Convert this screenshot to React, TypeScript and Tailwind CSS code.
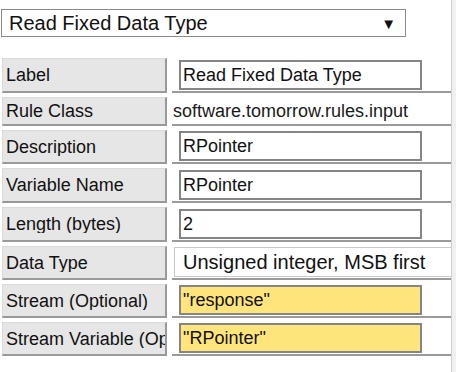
const font = { fontFamily: '"Liberation Sans", Arial, sans-serif' };

type Row = {
  label: string;
  kind: 'input' | 'text' | 'select';
  value: string;
  h: string;
  yellow?: boolean;
};

const rows: Row[] = [
  { label: 'Label', kind: 'input', value: 'Read Fixed Data Type', h: 'h-[35px]' },
  { label: 'Rule Class', kind: 'text', value: 'software.tomorrow.rules.input', h: 'h-[29px]' },
  { label: 'Description', kind: 'input', value: 'RPointer', h: 'h-[34px]' },
  { label: 'Variable Name', kind: 'input', value: 'RPointer', h: 'h-[35px]' },
  { label: 'Length (bytes)', kind: 'input', value: '2', h: 'h-[35px]' },
  { label: 'Data Type', kind: 'select', value: 'Unsigned integer, MSB first', h: 'h-[34px]' },
  { label: 'Stream (Optional)', kind: 'input', value: '"response"', h: 'h-[34px]', yellow: true },
  { label: 'Stream Variable (Optional)', kind: 'input', value: '"RPointer"', h: 'h-[34px]', yellow: true },
];

function Field({ row }: { row: Row }) {
  if (row.kind === 'text') {
    return <div className="pl-[1px] text-[18px] leading-none text-[#1a1a1a]">{row.value}</div>;
  }
  if (row.kind === 'select') {
    return (
      <div className="ml-[2px] flex h-[30px] w-[300px] shrink-0 items-center border border-[#c8c8c8] bg-white pl-[8px] text-[20px] leading-none text-[#111]">
        {row.value}
      </div>
    );
  }
  return (
    <div
      className={`ml-[7px] flex h-[30px] w-[243px] items-center border-2 border-[#858585] pl-[2px] text-[18px] leading-none text-[#111] ${
        row.yellow ? 'bg-[#ffe57c]' : 'bg-white'
      }`}
    >
      {row.value}
    </div>
  );
}

export default function App() {
  return (
    <div className="flex h-[372px] w-[456px] bg-white" style={font}>
      <div className="w-[451px] shrink-0">
        {/* Rule type dropdown */}
        <div className="ml-[1px] mt-[9px] flex h-[28px] w-[405px] items-center justify-between border border-[#8a8a8a] pl-[7px] pr-[9px] text-[20px] leading-none text-[#111]">
          <span>Read Fixed Data Type</span>
          <span className="text-[15px]">▼</span>
        </div>

        {/* Properties */}
        <div className="mt-[21px] flex flex-col gap-[4px]">
          {rows.map((row) => (
            <div key={row.label} className={`flex ${row.h}`}>
              <div className="ml-[2px] flex w-[165px] shrink-0 items-center overflow-hidden border-l border-t border-b-2 border-r-2 border-l-[#dadada] border-t-[#dadada] border-b-[#9a9a9a] border-r-[#9a9a9a] bg-[#e6e6e6] pl-[3px] text-[18px] leading-none text-[#111]">
                <span className="block overflow-hidden whitespace-nowrap">{row.label}</span>
              </div>
              <div className="ml-[5px] flex flex-1 items-center overflow-hidden border-b-2 border-[#9a9a9a]">
                <Field row={row} />
              </div>
            </div>
          ))}
        </div>
      </div>
      <div className="flex-1 border-l border-[#cfcfcf] bg-[#f0f0f0]" />
    </div>
  );
}
